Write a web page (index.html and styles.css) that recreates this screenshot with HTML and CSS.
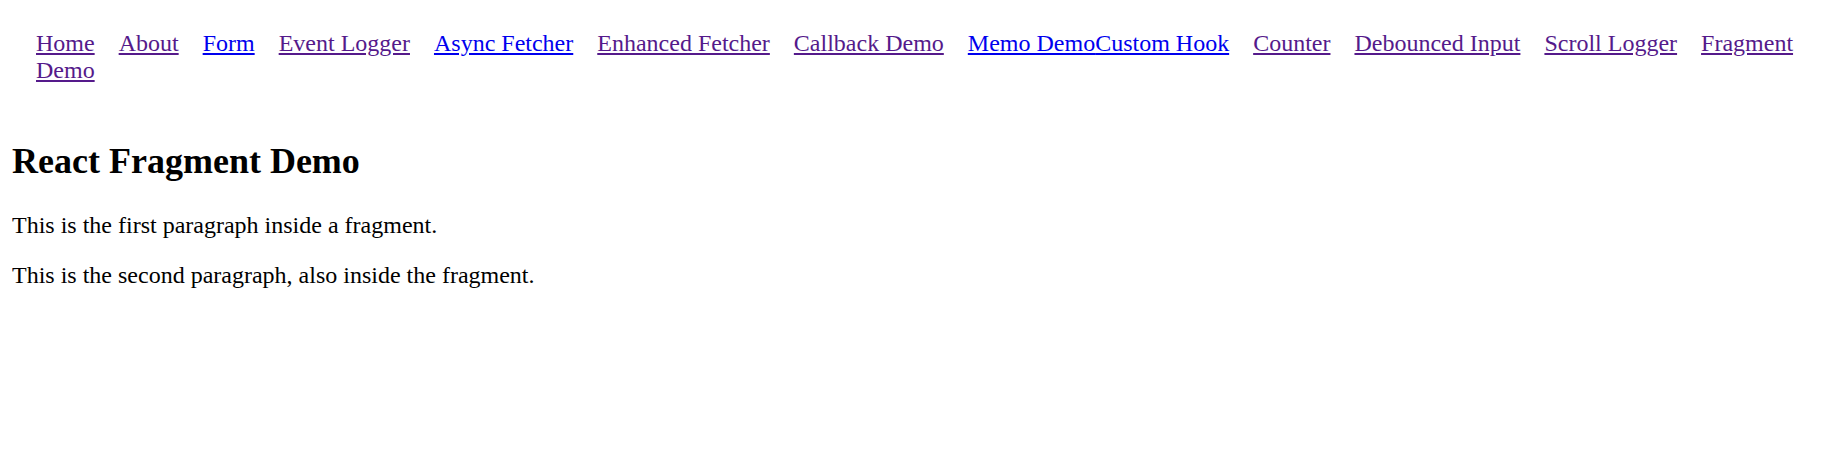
FILE: index.html
```html
<!DOCTYPE html>
<html lang="en">
<head>
<meta charset="utf-8">
<title>React Fragment Demo</title>
<link rel="stylesheet" href="styles.css">
</head>
<body>
<nav class="nav"><a class="link visited" href="#">Home</a><a class="link visited" href="#">About</a><a class="link" href="#">Form</a><a class="link visited" href="#">Event Logger</a><a class="link" href="#">Async Fetcher</a><a class="link visited" href="#">Enhanced Fetcher</a><a class="link visited" href="#">Callback Demo</a><a class="link tight" href="#">Memo Demo</a><a class="link" href="#">Custom Hook</a><a class="link visited" href="#">Counter</a><a class="link visited" href="#">Debounced Input</a><a class="link visited" href="#">Scroll Logger</a><a class="link visited" href="#">Fragment Demo</a></nav>
<main class="content">
<h2 class="title">React Fragment Demo</h2>
<p class="para">This is the first paragraph inside a fragment.</p>
<p class="para">This is the second paragraph, also inside the fragment.</p>
</main>
</body>
</html>
```
FILE: styles.css
```css
html, body {
  background: #ffffff;
}
body {
  margin: 12px;
  font-family: "Liberation Serif", "Times New Roman", serif;
  font-size: 24px;
  line-height: 25.7px;
  color: #000000;
}
.nav {
  padding: 18px 0 28px 24px;
  line-height: 26.8px;
}
.link {
  color: #0000ee;
  text-decoration: underline;
  margin-right: 24px;
}
.link.visited {
  color: #551a8b;
}
.link.tight {
  margin-right: 0;
}
.title {
  font-size: 36px;
  line-height: 38.5px;
  font-weight: bold;
  margin: 30px 0 32px;
}
.para {
  margin: 24px 0;
}
.title + .para {
  margin-top: 33px;
}
```
